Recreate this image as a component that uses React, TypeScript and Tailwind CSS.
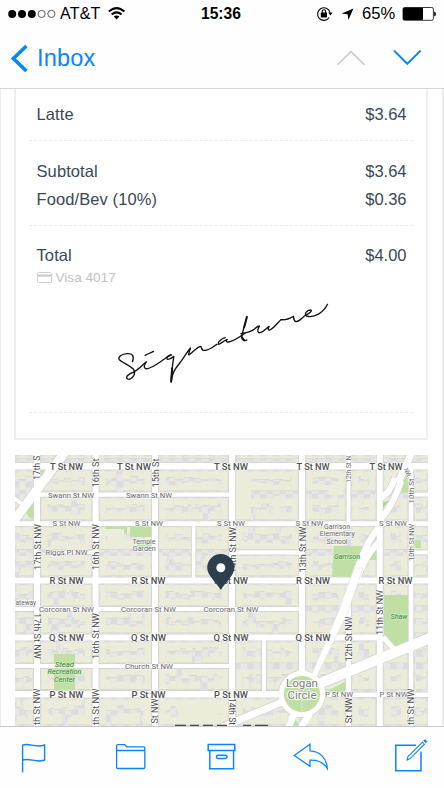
import React from "react";

const BLUE = "#0a84ff";

function StatusBar() {
  return (
    <div className="flex h-7 items-center font-['Liberation_Sans',Arial,sans-serif] text-black">
      <svg className="h-7 w-[60px] shrink-0" viewBox="0 0 60 28">
        {[12.2, 22, 31.8].map((x) => (
          <circle key={x} cx={x} cy="13.9" r="4" fill="#000" />
        ))}
        {[41.6, 51.4].map((x) => (
          <circle key={x} cx={x} cy="13.9" r="3.6" fill="none" stroke="#333" strokeWidth="0.8" />
        ))}
      </svg>
      <span className="w-[47px] shrink-0 text-[16px] leading-7 tracking-[0.2px]">AT&amp;T</span>
      <svg className="h-7 w-5 shrink-0" viewBox="107 0 20 28" fill="none" stroke="#000" strokeWidth="2">
        <path d="M108.8 11.6Q116.6 4.6 124.4 11.6" />
        <path d="M111.6 14.5Q116.6 10.2 121.6 14.5" />
        <path d="M116.6 19.4L113.8 16.5Q116.6 14.3 119.4 16.5Z" fill="#000" stroke="none" />
      </svg>
      <span className="ml-[74px] w-[115px] shrink-0 text-[15.6px] leading-7 font-bold">15:36</span>
      <svg className="h-7 w-[46px] shrink-0" viewBox="316 0 46 28">
        <path d="M329.2 17.5A6.3 6.3 0 1 1 330 12.5" fill="none" stroke="#000" strokeWidth="1.1" />
        <path d="M328.2 12.6h4.4l-2.2 3z" />
        <rect x="320.8" y="12.6" width="6.2" height="4.8" rx="0.6" />
        <path d="M322.2 13v-1.6a1.7 1.7 0 0 1 3.4 0V13" fill="none" stroke="#000" strokeWidth="1.1" />
        <path d="M353.4 8.4L341.6 13.6L347.6 14.2L348.4 20Z" />
      </svg>
      <span className="w-[40px] shrink-0 text-[16.6px] leading-7">65%</span>
      <svg className="h-7 w-9 shrink-0" viewBox="402 0 36 28">
        <rect x="403" y="7.5" width="30.4" height="12.8" rx="1.6" fill="#fff" stroke="#222" strokeWidth="0.9" />
        <rect x="403" y="7.7" width="20" height="12.4" rx="1" />
        <path d="M434.2 11.5q1.8 0.6 1.8 2.5t-1.8 2.5z" />
      </svg>
    </div>
  );
}

function NavBar() {
  return (
    <div className="flex h-[60px] items-center">
      <svg className="h-[60px] w-[37px] shrink-0" viewBox="0 28 37 60" fill="none">
        <path d="M26.4 46L13.4 58.5L26.4 71" stroke={BLUE} strokeWidth="3.6" />
      </svg>
      <span className="w-[290px] font-['Liberation_Sans',Arial,sans-serif] text-[23.5px] leading-[60px] tracking-[0.2px] text-[#0a84ff]">
        Inbox
      </span>
      <svg className="h-[60px] w-[110px] shrink-0" viewBox="327 28 110 60" fill="none">
        <path d="M337.5 64.8L351 51.6L364.5 64.8" stroke="#c9c9c9" strokeWidth="1.6" />
        <path d="M394 50.6L407.3 63.8L420.6 50.6" stroke={BLUE} strokeWidth="2" />
      </svg>
    </div>
  );
}

function Row({ label, value }: { label: string; value: string }) {
  return (
    <div className="flex h-7 items-center justify-between pr-1.5 pl-2 text-[16.5px] text-[#3a4854]">
      <span className="tracking-[0.1px]">{label}</span>
      <span>{value}</span>
    </div>
  );
}

function Divider() {
  return <div className="h-px border-t border-dashed border-[#ececec]" />;
}

function Signature() {
  return (
    <svg
      className="mx-auto mt-[5px] block h-[100px] w-60 -translate-x-[1.5px]"
      viewBox="0 0 720 300"
      fill="none"
      stroke="#111"
      strokeWidth="4"
      strokeLinecap="round"
      strokeLinejoin="round"
    >
      <path d="M99 215C105 198 99 190 83 191C66 192 55 201 59 208C66 219 102 229 105 244C107 259 92 271 84 267C76 260 88 252 100 247C117 239 126 227 140 216" />
      <path d="M140 216C134 226 131 233 139 236C152 239 176 220 195 207C203 201 209 195 215 195" />
      <path d="M137 196C145 191 152 190 162 184" />
      <path d="M215 195C206 196 199 204 204 208C210 210 218 203 223 199C220 218 216 248 215 275C217 248 229 234 244 215C257 197 264 184 273 174C270 184 266 191 268 195C277 190 292 171 303 169C307 170 304 178 311 181C326 184 339 172 352 163" />
      <path d="M377 143C366 146 354 156 356 163C361 164 371 153 383 148C379 154 380 157 387 156C403 154 421 141 436 130" />
      <path d="M442 81C438 103 428 122 427 142C428 152 437 153 442 150M424 131C440 129 454 126 465 117C471 111 476 108 480 108C475 116 473 125 478 128C487 131 499 117 509 109C505 116 505 121 511 120C525 113 535 98 544 89C552 90 565 89 582 79C583 86 582 94 590 95C602 93 610 80 619 75" />
      <path d="M619 75C630 70 641 61 633 60C621 60 613 73 621 78C644 85 672 68 684 43" />
      <path d="M442 81L434 112M218 235L215 275M427 142L434 151" strokeWidth="6" />
    </svg>
  );
}

function Receipt() {
  return (
    <section className="mx-auto h-[351px] w-[414px] -translate-x-px border-x-2 border-b-2 border-[#efefef] bg-white px-[13px] pt-[11px] font-['Liberation_Sans',Arial,sans-serif]">
      <Row label="Latte" value="$3.64" />
      <div className="h-3" />
      <Divider />
      <div className="h-4" />
      <Row label="Subtotal" value="$3.64" />
      <Row label="Food/Bev (10%)" value="$0.36" />
      <div className="h-3" />
      <Divider />
      <div className="h-[15px]" />
      <Row label="Total" value="$4.00" />
      <div className="mt-px flex h-[15px] items-center px-2 text-[13.6px] text-[#c2c2c2]">
        <svg className="mr-1 h-[11px] w-[15px]" viewBox="0 0 15 11">
          <rect x="0.5" y="0.5" width="14" height="10" rx="1" fill="#fff" stroke="#cfcfcf" />
          <rect x="0.5" y="2.5" width="14" height="2.2" fill="#cccccc" />
        </svg>
        <span className="translate-y-px">Visa 4017</span>
      </div>
      <Signature />
      <div className="h-[22px]" />
      <Divider />
    </section>
  );
}

// Street grid: [x1, y1, x2, y2, width]
const STREETS: number[][] = [
  [15, 466.3, 428, 466.3, 6.6],
  [40, 494.6, 231, 494.6, 4.4],
  [412, 494.6, 428, 494.6, 4],
  [15, 523.6, 428, 523.6, 4.6],
  [46, 552.4, 94, 552.4, 3.4],
  [232, 552.4, 300, 552.4, 4.2],
  [411, 552.4, 428, 552.4, 4],
  [15, 580.5, 428, 580.5, 6],
  [15, 609, 301, 609, 4],
  [15, 637.6, 380, 637.6, 6],
  [15, 666, 231, 666, 4.2],
  [15, 694.3, 285, 694.3, 6.6],
  [318, 694.8, 428, 694.8, 4.6],
  [37, 455, 37, 726, 6],
  [95.6, 455, 95.6, 726, 6],
  [155, 455, 155, 726, 6],
  [193.6, 523, 193.6, 580, 3.6],
  [232, 455, 232, 726, 6],
  [264, 637, 264, 694, 4],
  [302, 455, 302, 680, 6],
  [348.5, 455, 348.5, 523, 4],
  [348.5, 602, 348.5, 726, 5],
  [379.8, 455, 379.8, 726, 6],
  [411, 467, 411, 726, 4.6],
  [65, 452, 13, 522, 9],
  [14, 498, 25, 506, 4],
  [412, 452, 398, 483, 7],
  [430, 638, 318, 684, 10.5],
  [287, 700, 222, 727, 7],
  [383, 637, 395, 650, 5],
];

const COLS = [15, 34, 40, 92.5, 98.5, 152, 158, 229, 235, 299, 305, 346, 351, 376.5, 383, 408.5, 413.5, 428];
const ROWS = [455, 462.5, 470, 492, 497, 521, 526, 550.5, 554.5, 577, 584, 607, 611, 634, 641, 664, 668, 690.5, 698, 726];

type Box = { x: number; y: number; w: number; h: number };

function noise(seed: number) {
  const v = Math.sin(seed * 127.1 + 31.7) * 43758.5453;
  return v - Math.floor(v);
}

// Rows of terraced houses facing the streets around every block.
const HOUSES: Box[] = [];
for (let c = 0; c < COLS.length - 1; c += 2) {
  for (let r = 0; r < ROWS.length; r += 2) {
    const x0 = COLS[c] + 1.5;
    const x1 = COLS[c + 1] - 1.5;
    const y0 = ROWS[r] + 1.5;
    const y1 = ROWS[r + 1] - 1.5;
    const h = y1 - y0;
    let x = x0;
    let k = 0;
    while (x < x1 - 1) {
      const s = c * 101 + r * 17 + k * 3;
      const w = Math.min(2.5 + noise(s) * 6, x1 - x);
      const top = h * (0.24 + noise(s + 1) * 0.24);
      const bottom = h * (0.24 + noise(s + 2) * 0.24);
      if (noise(s + 5) > 0.06) HOUSES.push({ x, y: y0, w, h: top });
      if (h > 10 && noise(s + 7) > 0.06) HOUSES.push({ x, y: y1 - bottom, w, h: bottom });
      x += w;
      k++;
    }
    if (x1 - x0 > 20 && h > 15) {
      HOUSES.push({ x: x0, y: y0, w: 6, h });
      HOUSES.push({ x: x1 - 6, y: y0, w: 6, h });
    }
  }
}

// Street labels: [text, centre x, centre y, length, size, rotation, tone]
type Label = [string, number, number, number, number, number, "major" | "avenue" | "minor" | "park"];
const LABELS: Label[] = [
  ["T St NW", 66.5, 466.5, 33, 8.6, 0, "major"],
  ["T St NW", 134, 466.5, 34, 8.6, 0, "major"],
  ["T St NW", 231, 466.5, 34, 8.6, 0, "major"],
  ["T St NW", 313, 466.5, 33, 8.6, 0, "major"],
  ["T St NW", 386, 466.5, 33, 8.6, 0, "major"],
  ["Swann St NW", 71, 495, 46, 7.2, 0, "minor"],
  ["Swann St NW", 149, 495, 46, 7.2, 0, "minor"],
  ["S St NW", 66.5, 523.7, 28, 7.2, 0, "minor"],
  ["S St NW", 149, 523.7, 28, 7.2, 0, "minor"],
  ["S St NW", 231, 523.7, 28, 7.2, 0, "minor"],
  ["S St NW", 309.5, 523.7, 28, 7.2, 0, "minor"],
  ["S St NW", 393, 523.7, 28, 7.2, 0, "minor"],
  ["Riggs Pl NW", 66.5, 552, 42, 7.2, 0, "minor"],
  ["R St NW", 66.5, 580.6, 34, 8.6, 0, "major"],
  ["R St NW", 148.5, 580.6, 34, 8.6, 0, "major"],
  ["R St NW", 231, 580.6, 34, 8.6, 0, "major"],
  ["R St NW", 313, 580.6, 34, 8.6, 0, "major"],
  ["R St NW", 395.5, 580.6, 34, 8.6, 0, "major"],
  ["ateway", 25.8, 602.5, 20.5, 6.8, 0, "minor"],
  ["Corcoran St NW", 66.5, 609.2, 55, 7.2, 0, "minor"],
  ["Corcoran St NW", 148.5, 609.2, 55, 7.2, 0, "minor"],
  ["Corcoran St NW", 231, 609.2, 55, 7.2, 0, "minor"],
  ["Q St NW", 66.5, 637.7, 35, 8.6, 0, "major"],
  ["Q St NW", 148.5, 637.7, 35, 8.6, 0, "major"],
  ["Q St NW", 231, 637.7, 35, 8.6, 0, "major"],
  ["Q St NW", 313, 637.7, 35, 8.6, 0, "major"],
  ["Church St NW", 149, 666, 48, 7.4, 0, "minor"],
  ["P St NW", 66.5, 694.5, 34, 8.6, 0, "major"],
  ["P St NW", 148.5, 694.5, 34, 8.6, 0, "major"],
  ["P St NW", 231, 694.5, 34, 8.6, 0, "major"],
  ["P St NW", 339, 694.7, 28, 7.2, 0, "minor"],
  ["P St NW", 393.5, 694.7, 28, 7.2, 0, "minor"],
  ["17th S", 37.5, 467.8, 24, 8.6, -90, "avenue"],
  ["16th St", 96, 473, 29, 8.6, -90, "avenue"],
  ["15th St", 155.5, 473, 29, 8.6, -90, "avenue"],
  ["12th St N", 348.7, 469.3, 27, 7.2, -90, "minor"],
  ["NW", 407.5, 472.5, 9, 6.8, 65, "minor"],
  ["10th St", 411.3, 491, 25, 7.8, -90, "minor"],
  ["17th St NW", 37.5, 547, 46, 8.6, -90, "avenue"],
  ["16th St NW", 96, 547, 46, 8.6, -90, "avenue"],
  ["14th St NW", 232.5, 550, 46, 8.6, -90, "avenue"],
  ["13th St NW", 302.5, 549.5, 46, 8.6, -90, "avenue"],
  ["10th St NW", 411.3, 542.5, 37, 7.8, -90, "minor"],
  ["17th St NW", 37, 636, 46, 8.6, 90, "avenue"],
  ["16th St NW", 95.5, 636, 46, 8.6, -90, "avenue"],
  ["12th St NW", 348.7, 639, 45, 8.6, -90, "avenue"],
  ["11th St NW", 380, 612.5, 45, 8.6, -90, "avenue"],
  ["th St NW", 37, 706.7, 36.5, 8.6, -90, "avenue"],
  ["th St NW", 95.5, 706.7, 36.5, 8.6, -90, "avenue"],
  ["St NW", 155, 711, 25, 8.6, -90, "avenue"],
  ["14th St", 232, 711.5, 27, 8.6, 90, "avenue"],
  ["St NW", 348.7, 710.3, 26, 8.6, -90, "avenue"],
  ["th St NW", 411.3, 706.7, 36.5, 8.6, -90, "avenue"],
  ["Temple", 144, 541.2, 23, 7, 0, "minor"],
  ["Garden", 144.3, 548.5, 23, 7, 0, "minor"],
  ["Garrison", 337, 526.4, 26, 7, 0, "minor"],
  ["Elementary", 337.3, 534, 35, 7, 0, "minor"],
  ["School", 337, 541.7, 21, 7, 0, "minor"],
  ["Garrison", 347, 557, 26, 7, 0, "park"],
  ["Shaw", 399, 616.8, 17, 7, 0, "park"],
  ["Stead", 64.5, 664.3, 19, 7, 0, "park"],
  ["Recreation", 64.5, 671.8, 34, 7, 0, "park"],
  ["Center", 64.5, 679.3, 21, 7, 0, "park"],
];

const TONES = {
  major: "fill-[#505050] stroke-white/80 font-medium",
  avenue: "fill-[#4c4c4c] stroke-white/80",
  minor: "fill-[#666666] stroke-white/80",
  park: "fill-[#37803a] stroke-[#d5eebf] italic",
};

// Vermont Avenue narrows towards the circle and splits around S Street.
const VERMONT =
  "M395 478C391 490 386 496 379 499M401 481C395 500 389 510 380 520M379 527C368 540 362 556 356 572M379 542C366 554 360 572 352 590L343 612";

function StreetMap() {
  return (
    <svg
      className="mx-auto block h-[271px] w-[413px] shrink-0 font-[Roboto,'Liberation_Sans',sans-serif]"
      viewBox="15 455 413 271"
    >
      <defs>
        <pattern id="lots" width="13" height="13" patternUnits="userSpaceOnUse">
          <rect width="13" height="13" fill="#e7e7e6" />
          <rect width="6.5" height="6.5" fill="#dddddd" />
          <rect x="6.5" y="6.5" width="6.5" height="6.5" fill="#dddddd" />
        </pattern>
      </defs>
      <rect x="15" y="455" width="413" height="271" fill="url(#lots)" />
      <g fill="#d3d3c8">
        {HOUSES.map((b, i) => (
          <rect key={i} x={b.x + 0.4} y={b.y + 0.6} width={b.w} height={b.h} />
        ))}
      </g>
      <g fill="#ebecd9">
        {HOUSES.map((b, i) => (
          <rect key={i} x={b.x} y={b.y} width={b.w + 0.3} height={b.h} />
        ))}
        <rect x="107" y="531" width="18" height="15" />
        <rect x="236" y="472" width="15" height="46" />
        <rect x="274" y="496" width="6" height="18" />
        <rect x="329" y="486" width="14" height="9" />
        <path d="M174 702l32-3 22 4v10l-48 6z" />
      </g>
      <g fill="#bfdfa5">
        <path d="M40 469h9l-9 12z" />
        <path d="M26 511l8-10v18q-6 0-8-8z" />
        <path d="M105 526h22v8h-3v-5h-19zM130 526h21v11h-21z" />
        <path d="M137 540h14v7h-14z" />
        <path d="M334 546h32l-14 31h-20z" />
        <path d="M407 475l2 18-11-1zM376 551v9h-9z" />
        <path d="M414 540h7v8h-7zM384 595h30v46l-20 8-10-12z" />
        <path d="M350 600v18l-6-5zM325 692l20-10v10zM290 727l4-10 6 10z" />
        <path d="M54 654h21v36h-21z" />
      </g>
      <g stroke="#d2d2d0" fill="none">
        {STREETS.map(([a, b, c, d, w], i) => (
          <line key={i} x1={a} y1={b} x2={c} y2={d} strokeWidth={w + 1.5} />
        ))}
        <path d={VERMONT} strokeWidth="7.5" />
      </g>
      <circle cx="302" cy="694" r="24" fill="#d2d2d0" />
      <g stroke="#fff" fill="none">
        {STREETS.map(([a, b, c, d, w], i) => (
          <line key={i} x1={a} y1={b} x2={c} y2={d} strokeWidth={w} />
        ))}
        <path d={VERMONT} strokeWidth="6.2" />
        <path d="M294 714l-5 13M310 714l-9 13" strokeWidth="6.5" />
      </g>
      <path d="M354 568L363 568L348 612L317 676L311 676L339 610Z" fill="#fff" stroke="#d8d8d6" strokeWidth="0.5" />
      <path d="M383 503l6-3-6 8z" fill="#a9d68c" />
      <path d="M298 671l4-6 4 6 14 8-8 32h-20l-8-30z" fill="#fff" />
      <circle cx="302" cy="694" r="23.2" fill="#fff" />
      <circle cx="302" cy="694" r="18" fill="#bfdfa5" />
      <path d="M302 700v17" stroke="#e3f1d5" strokeDasharray="2 1" />
      <g strokeWidth="1.3" strokeLinejoin="round" textAnchor="middle">
        {LABELS.map(([text, x, y, len, size, rot, tone], i) => (
          <text
            key={i}
            x={x}
            y={y + size * 0.35}
            fontSize={size}
            textLength={len}
            lengthAdjust="spacingAndGlyphs"
            transform={`rotate(${rot} ${x} ${y})`}
            className={`${TONES[tone]} [paint-order:stroke]`}
          >
            {text}
          </text>
        ))}
        <g className="fill-[#7b7b7b] stroke-white [paint-order:stroke]" strokeWidth="2" fontSize="10.6">
          <text x="302" y="686.5" textLength="32" lengthAdjust="spacingAndGlyphs">Logan</text>
          <text x="302" y="699.3" textLength="29" lengthAdjust="spacingAndGlyphs">Circle</text>
        </g>
      </g>
      <path
        d="M220.8 590C216.5 582.5 207.2 576 207.2 567.6A13.6 13.6 0 0 1 234.4 567.6C234.4 576 225 582.5 220.8 590Z"
        fill="#2d3e4d"
      />
      <circle cx="220.8" cy="567.8" r="4.5" fill="#fff" />
      <path d="M175 725.4h11M190 725.4h9M203 725.4h10M217 725.4h10M243 725.4h8M255 725.4h13" stroke="#3f4d58" strokeWidth="1.4" />
    </svg>
  );
}

function Toolbar() {
  return (
    <footer className="flex h-[62px] shrink-0 items-start border-t border-[#c8c8c8] bg-[#fefefe] pt-[9px] pl-[15px] [&>svg]:h-10 [&>svg]:w-9 [&>svg]:shrink-0">
      <svg viewBox="15 736 36 40" fill="none" stroke={BLUE} strokeWidth="1.4">
        <path d="M22.6 772.5V745.2C29 742.4 35 748.4 44.6 745V760C36 763.5 29.5 757.2 22.6 760.2" />
      </svg>
      <svg className="ml-[61px]" viewBox="112 736 36 40" fill="none" stroke={BLUE} strokeWidth="1.3">
        <path d="M116.6 750.5V745.7Q116.6 744.6 117.8 744.6H124.6L126.6 746.9H143.7Q144.8 746.9 144.8 748V767.5Q144.8 768.5 143.7 768.5H117.8Q116.6 768.5 116.6 767.5V750.5H144.8" />
      </svg>
      <svg className="ml-[55px]" viewBox="203 736 36 40" fill="none" stroke={BLUE} strokeWidth="1.5">
        <path d="M208.2 744.5H234.8V750.5H208.2ZM209.8 750.5V768.7H233.6V750.5" />
        <rect x="216.4" y="755.2" width="10.6" height="3.2" rx="1.6" />
      </svg>
      <svg className="ml-[54px]" viewBox="293 736 36 40" fill="none" stroke={BLUE} strokeWidth="1.3">
        <path d="M310 744.3L294.2 755.5L310 766.2V760.2C317.5 759.7 323 761.8 327.3 768.5C326.8 758 319.5 751.2 310 750.8Z" />
      </svg>
      <svg className="ml-[64px]" viewBox="393 736 36 40" fill="none" stroke={BLUE} strokeWidth="1.5">
        <path d="M416 745.3H395.8V770.7H421V751.5" />
        <path d="M407 760L408 756.6L422.4 742.2L424.4 744.2L410.2 758.6Z" strokeWidth="1.1" />
        <path d="M423.8 740.8L425 739.6L426.9 741.5L425.7 742.7Z" fill={BLUE} strokeWidth="0.9" />
      </svg>
    </footer>
  );
}

export default function App() {
  return (
    <div className="flex h-[788px] w-[444px] flex-col overflow-hidden bg-white">
      <header className="h-[89px] shrink-0 border-b border-[#d6d6d6] bg-[#fefefe]">
        <StatusBar />
        <NavBar />
      </header>
      <main className="h-[637px] shrink-0 overflow-hidden border-r-2 border-l border-[#ededed] bg-white">
        <Receipt />
        <div className="h-[15px]" />
        <StreetMap />
      </main>
      <Toolbar />
    </div>
  );
}
